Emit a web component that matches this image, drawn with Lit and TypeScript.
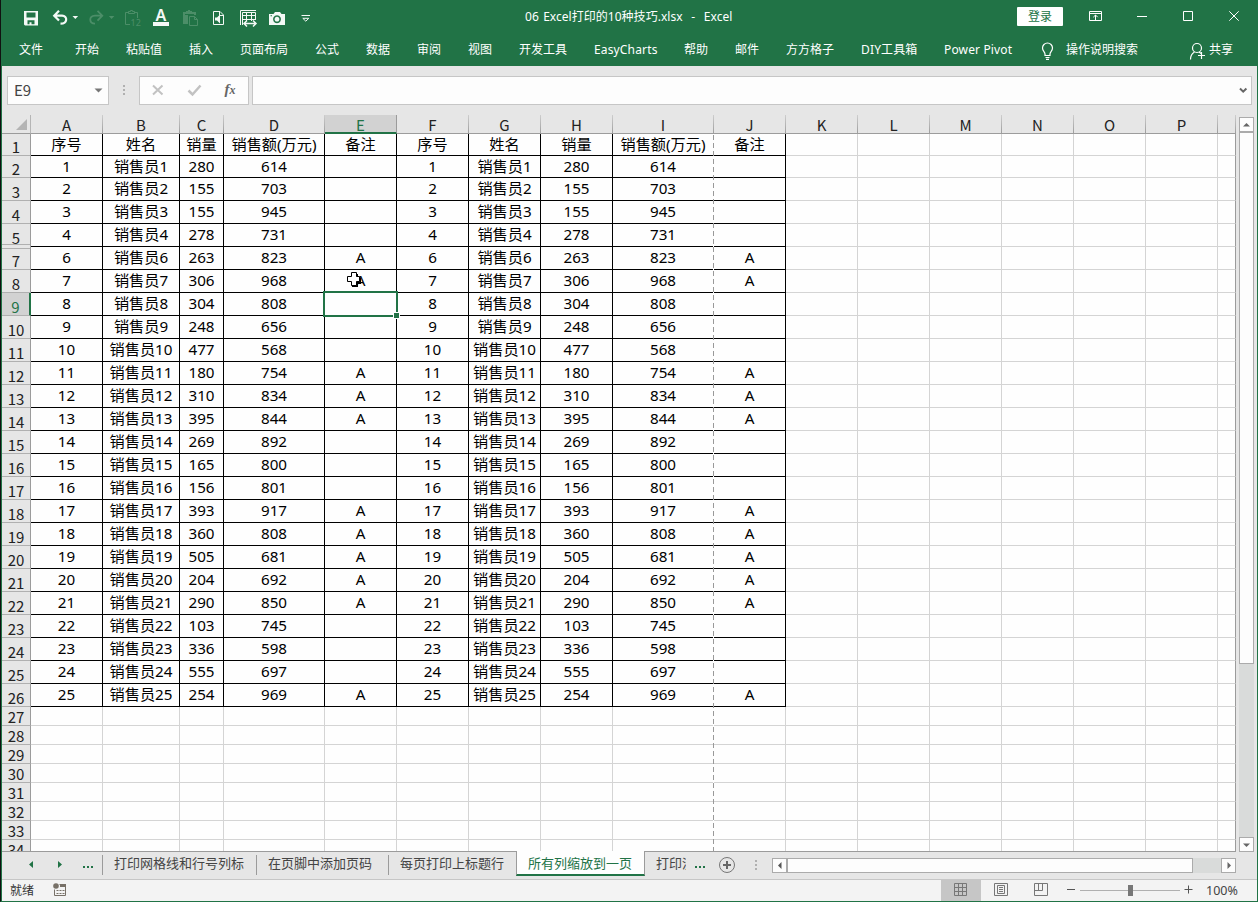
import { LitElement, html, svg, css, nothing } from "lit";
import { customElement } from "lit/decorators.js";
import { classMap } from "lit/directives/class-map.js";

type Icon = { from: number; to: number; art: unknown };

const W = "#f4f9f6";
const DIM = "#4c8e68";

const quickIcons: Icon[] = [
  { from: 2, to: 45, art: svg`<path fill="${W}" fill-rule="evenodd" d="M24 11h14v14.500H25l-1-1zM26.500 12.600v4.800h9v-4.800zM27.500 20.300v4h2v-2h2v2h3v-4z"/>` },
  { from: 45, to: 69, art: svg`<path fill="none" stroke="${W}" stroke-width="2.200" d="M59 10.800 54.200 15.700 59 20.600M54.500 15.700H62C68 16 67.600 23.600 60.500 23.600"/>` },
  { from: 69, to: 82, art: svg`<path fill="${W}" d="M72.500 16h5.600L75.300 19z"/>` },
  { from: 82, to: 105, art: svg`<path fill="none" stroke="${DIM}" stroke-width="1.800" d="M97.500 10.800 102.300 15.700 97.500 20.600M102 15.700H95C88.500 16 88.900 23.600 95 23.600"/>` },
  { from: 105, to: 118, art: svg`<path fill="${DIM}" d="M108.800 16h5.600L111.600 19z"/>` },
  { from: 118, to: 146, art: svg`<g fill="none" stroke="${DIM}"><path d="M130 24.500H125.500V12.500H128.500M134.500 12.500H137.500V18"/><path d="M128.500 13.500V11.500H130.500V10.500H132.500V11.500H134.500V13.500Z"/></g><text x="130.500" y="26" font-size="9" fill="${DIM}" font-family="Noto Sans">12</text>` },
  { from: 146, to: 176, art: svg`<text x="161" y="21.300" text-anchor="middle" font-size="16" font-weight="600" fill="${W}" font-family="Noto Sans">A</text><rect x="153" y="22" width="16" height="4" fill="${W}"/>` },
  { from: 176, to: 205, art: svg`<path fill="${DIM}" d="M183 12h3v-1h2v-1h2v1h2v1h4v3h-2v-1h-9v1h3v9h-5z"/><path fill="none" stroke="${DIM}" d="M189.500 16.500h5l3 3v6h-8zM194.500 16.500v3h3"/>` },
  { from: 205, to: 232, art: svg`<path fill="none" stroke="${W}" d="M213.500 11.500h6.500l3.500 3.500v9.500h-10z M219.500 11.500v4h4"/><path fill="${W}" d="M215 17.500h2l3-3v9l-3-3h-2z"/>` },
  { from: 232, to: 263, art: svg`<g fill="none" stroke="${W}"><path d="M240.500 25V10.500H256M242.500 25V12.500H255.500V20M242.500 15.500H255.500M242.500 19.500H255.500M246.500 12.500V21M251.500 12.500V21"/><path stroke-width="1.500" d="M244 23.500H256M247 20.500 244 23.500 247 26.500M253 20.500 256 23.500 253 26.500"/></g>` },
  { from: 263, to: 292, art: svg`<path fill="${W}" fill-rule="evenodd" d="M269 14h4.500l1.500-2h5l1.500 2h3.500v11h-16zM277 15.300a4 4 0 1 0 .01 0zM277 16.800a2.400 2.400 0 1 1-.01 0zM270.500 15.300h1.500v1h-1.500z"/>` },
  { from: 292, to: 324, art: svg`<path stroke="${W}" d="M301.500 15.500h8.500"/><path fill="none" stroke="${W}" d="M302.800 18.300h6L305.800 21.200z"/>` },
];

const menu: [string, number, number][] = [
  ["文件", 19, 75], ["开始", 75, 126], ["粘贴值", 126, 189], ["插入", 189, 240], ["页面布局", 240, 315],
  ["公式", 315, 366], ["数据", 366, 417], ["审阅", 417, 468], ["视图", 468, 519], ["开发工具", 519, 594],
  ["EasyCharts", 594, 684], ["帮助", 684, 735], ["邮件", 735, 786], ["方方格子", 786, 861],
  ["DIY工具箱", 861, 944], ["Power Pivot", 944, 1041],
];

const letters = "ABCDEFGHIJKLMNOP".split("");
const quantities: Record<number, [number, number, boolean]> = {
  1: [280, 614, false], 2: [155, 703, false], 3: [155, 945, false], 4: [278, 731, false],
  6: [263, 823, true], 7: [306, 968, true], 8: [304, 808, false], 9: [248, 656, false],
  10: [477, 568, false], 11: [180, 754, true], 12: [310, 834, true], 13: [395, 844, true],
  14: [269, 892, false], 15: [165, 800, false], 16: [156, 801, false], 17: [393, 917, true],
  18: [360, 808, true], 19: [505, 681, true], 20: [204, 692, true], 21: [290, 850, true],
  22: [103, 745, false], 23: [336, 598, false], 24: [555, 697, false], 25: [254, 969, true],
};

const rowNumbers = Array.from({ length: 34 }, (_, i) => i + 1).filter((n) => n !== 6);

function rowValues(n: number): string[] {
  if (n === 1) {
    const head = ["序号", "姓名", "销量", "销售额(万元)", "备注"];
    return [...head, ...head];
  }
  const id = n - 1;
  const q = quantities[id];
  if (!q) return [];
  const half = [String(id), `销售员${id}`, String(q[0]), String(q[1]), q[2] ? "A" : ""];
  return [...half, ...half];
}

@customElement("excel-titlebar")
class ExcelTitlebar extends LitElement {
  static styles = css`
    :host { display: block; height: 66px; background: #217346; color: #fff; font: 12px/18px "Noto Sans", "Noto Sans CJK SC", sans-serif; }
    svg { display: block; flex: none; }
    .top { display: flex; height: 33px; padding-left: 1px; }
    .title { flex: none; width: 693px; padding: 8px 0 0 201px; box-sizing: border-box; white-space: pre; letter-spacing: 0.03px; word-spacing: 1.200px; }
    .login { flex: none; margin-top: 7px; width: 46px; height: 19px; line-height: 19px; background: #fff; color: #217346; text-align: center; border-radius: 1px; }
    .menu { display: flex; height: 33px; padding-left: 18px; }
    .menu span { flex: none; padding-top: 8px; box-sizing: border-box; white-space: nowrap; }
    .latin { letter-spacing: 0.15px; }
    .search { width: 119px; }
  `;
  render() {
    return html`
      <div class="top">
        ${quickIcons.map((i) => html`<svg width=${i.to - i.from} height="33" viewBox="${i.from} 0 ${i.to - i.from} 33">${i.art}</svg>`)}
        <div class="title">06 Excel打印的10种技巧.xlsx  -  Excel</div>
        <div class="login">登录</div>
        <svg width="194" height="33" viewBox="1063 0 194 33" fill="none" stroke="#fff">
          <path d="M1089.500 11.500h12v9h-12zM1089.500 13.500h12M1095.500 20v-5M1093.300 17.200l2.200-2.200 2.200 2.200"/>
          <path d="M1137 16.500h10M1183.500 11.500h9v9h-9zM1229.300 11.300l9.400 9.400M1238.700 11.300l-9.400 9.400"/>
        </svg>
      </div>
      <div class="menu">
        ${menu.map(([t, a, b]) => html`<span class=${classMap({ latin: /^[A-Z]/.test(t) })} style="width:${b - a}px">${t}</span>`)}
        <svg width="25" height="33" viewBox="1041 33 25 33" fill="none" stroke="#fff" stroke-width="1.200">
          <path d="M1045 55.500v-1.500c0-2-2.500-3-2.500-6a5 5 0 0 1 10 0c0 3-2.500 4-2.500 6v1.500zM1045.500 57.500h4M1046 59.300h3"/>
        </svg>
        <span class="search">操作说明搜索</span>
        <svg width="24" height="33" viewBox="1185 33 24 33" fill="none" stroke="#fff" stroke-width="1.200">
          <circle cx="1197" cy="48" r="4.500"/><path d="M1190.500 59.500c0-4 1.500-6 4-7.500M1199 52l2 1.500M1201.500 52v7M1198 55.500h7"/>
        </svg>
        <span>共享</span>
      </div>`;
  }
}

@customElement("excel-formula-bar")
class ExcelFormulaBar extends LitElement {
  static styles = css`
    :host { display: flex; height: 49px; padding: 10px 5px 0 5px; box-sizing: border-box; }
    .box { height: 29px; box-sizing: border-box; background: #fdfdfd; border: 1px solid #c6c6c6; display: flex; justify-content: space-between; }
    .name { width: 102px; font: 15px/26px "Noto Sans CJK SC", sans-serif; color: #444; padding-left: 6px; }
    .tools { width: 110px; }
    .input { width: 1000px; margin-left: 3px; justify-content: flex-end; }
    svg { display: block; flex: none; }
    text { font: italic bold 15px "Liberation Serif", serif; }
  `;
  render() {
    return html`
      <div class="box name"><span>E9</span><svg width="17" height="27" viewBox="0 0 17 27"><path d="M3.500 11.500h8L7.500 15.500z" fill="#777"/></svg></div>
      <svg width="30" height="29" fill="#b0b0b0"><path d="M14 9h2v2h-2zM14 13h2v2h-2zM14 17h2v2h-2z"/></svg>
      <div class="box tools">
        <svg width="108" height="27" viewBox="140 77 108 27" fill="none" stroke="#c2c2c2">
          <path stroke-width="2" d="M153 85.500l9.500 9M162.500 85.500l-9.500 9"/><path stroke-width="2.500" d="M188.500 90.500l4 4 8-9"/>
          <text x="224.500" y="94" fill="#666" stroke="none">f<tspan font-size="12">x</tspan></text>
        </svg>
      </div>
      <div class="box input"><svg width="16" height="27"><path d="M5 11.500l3.200 3.200 3.200-3.200" fill="none" stroke="#666" stroke-width="2"/></svg></div>`;
  }
}

@customElement("excel-sheet")
class ExcelSheet extends LitElement {
  static styles = css`
    :host { display: block; position: relative; width: 1234px; height: 737px; overflow: hidden; border-bottom: 1px solid #9b9b9b; box-sizing: border-box; }
    .grid { display: grid; grid-template-columns: 29px 72px 77px 44px 101px repeat(4, 72px) 101px repeat(7, 72px) 18px;
      grid-template-rows: 19px repeat(2, 22px) repeat(23, 23px) repeat(8, 19px); }
    .grid > div { box-sizing: border-box; white-space: nowrap; text-align: center; }
    .col, .row { font: 15px/19px "Noto Sans CJK SC", sans-serif; color: #222; background: #e6e6e6; }
    .col { border-bottom: 1px solid #9b9b9b; border-right: 1px solid; border-image: linear-gradient(#d0d0d0, #9b9b9b) 1; }
    .col.on { background: #d2d2d2; color: #217346; border-bottom: 2px solid #217346; border-image: none; border-right: 1px solid #9b9b9b; }
    .corner { border-right: 1px solid #b5b5b5; border-bottom: 1px solid #9b9b9b; background: #e6e6e6; }
    .corner svg { display: block; }
    .row { display: flex; justify-content: center; align-items: flex-end; line-height: 17px; border-right: 1px solid #9b9b9b; border-bottom: 1px solid #b0b0b0; }
    .row.on { background: #d2d2d2; color: #217346; border-right: 2px solid #217346; }
    .row.before { border-bottom: 0; background: linear-gradient(#b0b0b0, #b0b0b0) 0 20px / 100% 1px no-repeat #e6e6e6; padding-bottom: 1px; }
    .row.after { background: linear-gradient(#b0b0b0, #b0b0b0) 0 1px / 100% 1px no-repeat #e6e6e6; }
    .cell { background: #fefefe; border-right: 1px solid #d4d4d4; border-bottom: 1px solid #d4d4d4; font: 15.200px/20px "Noto Sans", "Noto Sans CJK SC", sans-serif; color: #000; }
    .cell.data { border-color: #000; }
    .cell.edge { border-right-color: #9b9b9b; }
    .pagebreak { position: absolute; left: 711px; top: 19px; width: 1px; height: 718px; background: repeating-linear-gradient(#fefefe 0 1px, #999 1px 6px, #fefefe 6px 8px); }
    .selection { position: absolute; left: 321px; top: 176px; width: 75px; height: 26px; box-sizing: border-box; border: 2px solid #217346; }
    .handle { position: absolute; left: 391px; top: 197px; width: 5px; height: 5px; background: #217346; border: 1px solid #fefefe; }
    .pointer { position: absolute; left: 343px; top: 156px; }
  `;
  render() {
    return html`
      <div class="grid">
        <div class="corner"><svg width="28" height="18"><path d="M25 4v11H14z" fill="#b4b4b4"/></svg></div>
        ${letters.map((l) => html`<div class=${classMap({ col: true, on: l === "E" })}>${l}</div>`)}
        <div class="col"></div>
        ${rowNumbers.map((n) => {
          const v = rowValues(n);
          return html`
            <div class=${classMap({ row: true, on: n === 9, before: n === 5, after: n === 7 })}><span>${n}</span></div>
            ${Array.from({ length: 17 }, (_, c) => html`<div class=${classMap({ cell: true, data: n <= 26 && c < 10, edge: c === 16 })}>${v[c] || nothing}</div>`)}`;
        })}
      </div>
      <div class="pagebreak"></div>
      <div class="selection"></div>
      <div class="handle"></div>
      <svg class="pointer" width="20" height="18"><path d="M7 3h6v4h3v6h-3v3H7v-3z" fill="#000"/><path d="M6.500 1.500h5v4h3v5h-3v4h-5v-4h-4v-5h4z" fill="#fff" stroke="#000"/></svg>`;
  }
}

@customElement("excel-vscroll")
class ExcelVscroll extends LitElement {
  static styles = css`
    :host { display: flex; flex-direction: column; width: 15px; height: 735px; background: #d9dbda; margin: 2px 0 0 3px; }
    .b { box-sizing: border-box; border: 1px solid #ababab; background: #fdfdfd; height: 15px; }
    .thumb { height: 532px; }
    .space { flex: 1; }
    svg { display: block; }
  `;
  render() {
    return html`
      <div class="b"><svg width="13" height="13"><path d="M3 8.500h7L6.500 5z" fill="#666"/></svg></div>
      <div class="b thumb"></div><div class="space"></div>
      <div class="b"><svg width="13" height="13"><path d="M3 5.500h7L6.500 9z" fill="#666"/></svg></div>`;
  }
}

@customElement("excel-tabs")
class ExcelTabs extends LitElement {
  static styles = css`
    :host { display: flex; height: 28px; box-sizing: border-box; border-bottom: 1px solid #c6c6c6; font: 13px/22px "Noto Sans", "Noto Sans CJK SC", sans-serif; color: #444; white-space: nowrap; }
    svg { display: block; flex: none; }
    .tab { box-sizing: border-box; flex: none; height: 20px; margin-top: 3px; border-left: 1px solid #9b9b9b; line-height: 16px; padding-left: 11px; }
    .t1 { width: 154px; } .t2 { width: 132px; } .t3 { width: 128px; }
    .active { width: 129px; height: 25px; margin-top: -1px; border: solid #9b9b9b; border-width: 0 1px; border-bottom: 2px solid #217346; background: #fefefe; color: #217346; line-height: 24px; padding-left: 11px; box-sizing: border-box; flex: none; z-index: 1; }
    .cut { width: 41px; box-sizing: border-box; padding-left: 11px; overflow: hidden; height: 24px; flex: none; }
    .h { display: flex; flex: none; width: 464px; height: 15px; margin-top: 6px; background: #d9dbda; }
    .b { box-sizing: border-box; border: 1px solid #ababab; background: #fdfdfd; width: 15px; }
    .thumb { width: 406px; }
    .space { flex: 1; }
  `;
  render() {
    return html`
      <svg width="100" height="27" viewBox="2 852 100 27" fill="#217346">
        <path d="M33 861v7l-4-3.500zM58 861v7l4-3.500zM83 866h2v2h-2zM87 866h2v2h-2zM91 866h2v2h-2z"/>
      </svg>
      <div class="tab t1">打印网格线和行号列标</div>
      <div class="tab t2">在页脚中添加页码</div>
      <div class="tab t3">每页打印上标题行</div>
      <div class="active">所有列缩放到一页</div>
      <div class="cut">打印没</div>
      <svg width="86" height="27" viewBox="686 852 86 27">
        <path fill="#217346" d="M695 866h2v2h-2zM699 866h2v2h-2zM703 866h2v2h-2z"/>
        <circle cx="727" cy="865" r="7.500" fill="none" stroke="#777"/>
        <path stroke="#666" stroke-width="2" d="M723 865h8M727 861v8"/>
        <path fill="#b0b0b0" d="M755 860h2v2h-2zM755 864h2v2h-2zM755 868h2v2h-2z"/>
      </svg>
      <div class="h">
        <div class="b"><svg width="13" height="13"><path d="M8.500 3v7L5 6.500z" fill="#555"/></svg></div>
        <div class="b thumb"></div><div class="space"></div>
        <div class="b"><svg width="13" height="13"><path d="M5.500 3v7L9 6.500z" fill="#666"/></svg></div>
      </div>`;
  }
}

@customElement("excel-status")
class ExcelStatus extends LitElement {
  static styles = css`
    :host { display: flex; height: 21px; background: #f3f3f3; font: 12px/22px "Noto Sans", "Noto Sans CJK SC", sans-serif; color: #333; }
    .ready { width: 48px; padding-left: 8px; box-sizing: border-box; }
    .zoom { font-size: 12.500px; color: #444; padding-left: 3px; }
    svg { display: block; flex: none; }
  `;
  render() {
    return html`
      <span class="ready">就绪</span>
      <svg width="891" height="21" viewBox="50 880 891 21">
        <circle cx="56" cy="886" r="2.800" fill="#777067"/>
        <path fill="none" stroke="#777067" d="M54.500 889.500v6h11v-11h-6"/>
        <path stroke="#777067" stroke-width="3" d="M60 885.500h6"/>
        <path stroke="#777067" stroke-dasharray="2 1" d="M56.500 890.500h8M56.500 893.500h8"/>
      </svg>
      <svg width="262" height="21" viewBox="941 880 262 21" fill="none" stroke="#777">
        <rect x="941" y="880" width="40" height="21" fill="#c6c6c6" stroke="none"/>
        <path d="M954.500 883.500h12v12h-12zM958.500 883.500v12M962.500 883.500v12M954.500 887.500h12M954.500 891.500h12"/>
        <path d="M994.500 883.500h13v12h-13zM997.500 885.500h7v8h-7zM999 887.500h4M999 889.500h4M999 891.500h4"/>
        <path d="M1034.500 883.500h13v12h-13zM1034.500 890.500h8v-7M1038.500 883.500v7"/>
        <path stroke="#555" d="M1067 889.500h8M1184.500 889.500h8M1188.500 885.500v8"/>
        <path stroke="#b0b0b0" d="M1080 890.500h100"/>
        <rect x="1128" y="885" width="5" height="11" fill="#777" stroke="none"/>
      </svg>
      <span class="zoom">100%</span>`;
  }
}

@customElement("app-root")
class AppRoot extends LitElement {
  static styles = css`
    :host { display: flex; flex-direction: column; width: 1258px; height: 902px; box-sizing: border-box; overflow: hidden;
      background: #e6e6e6; border: solid #217346; border-width: 0 1px 1px 1px; border-left: 1px solid #111; padding-left: 1px; box-shadow: inset 1px 0 #217346; }
    .body { display: flex; height: 737px; flex: none; }
    excel-titlebar, excel-formula-bar, excel-tabs, excel-status { flex: none; }
    excel-titlebar { margin-left: -1px; }
  `;
  render() {
    return html`
      <excel-titlebar></excel-titlebar>
      <excel-formula-bar></excel-formula-bar>
      <div class="body"><excel-sheet></excel-sheet><excel-vscroll></excel-vscroll></div>
      <excel-tabs></excel-tabs>
      <excel-status></excel-status>`;
  }
}
